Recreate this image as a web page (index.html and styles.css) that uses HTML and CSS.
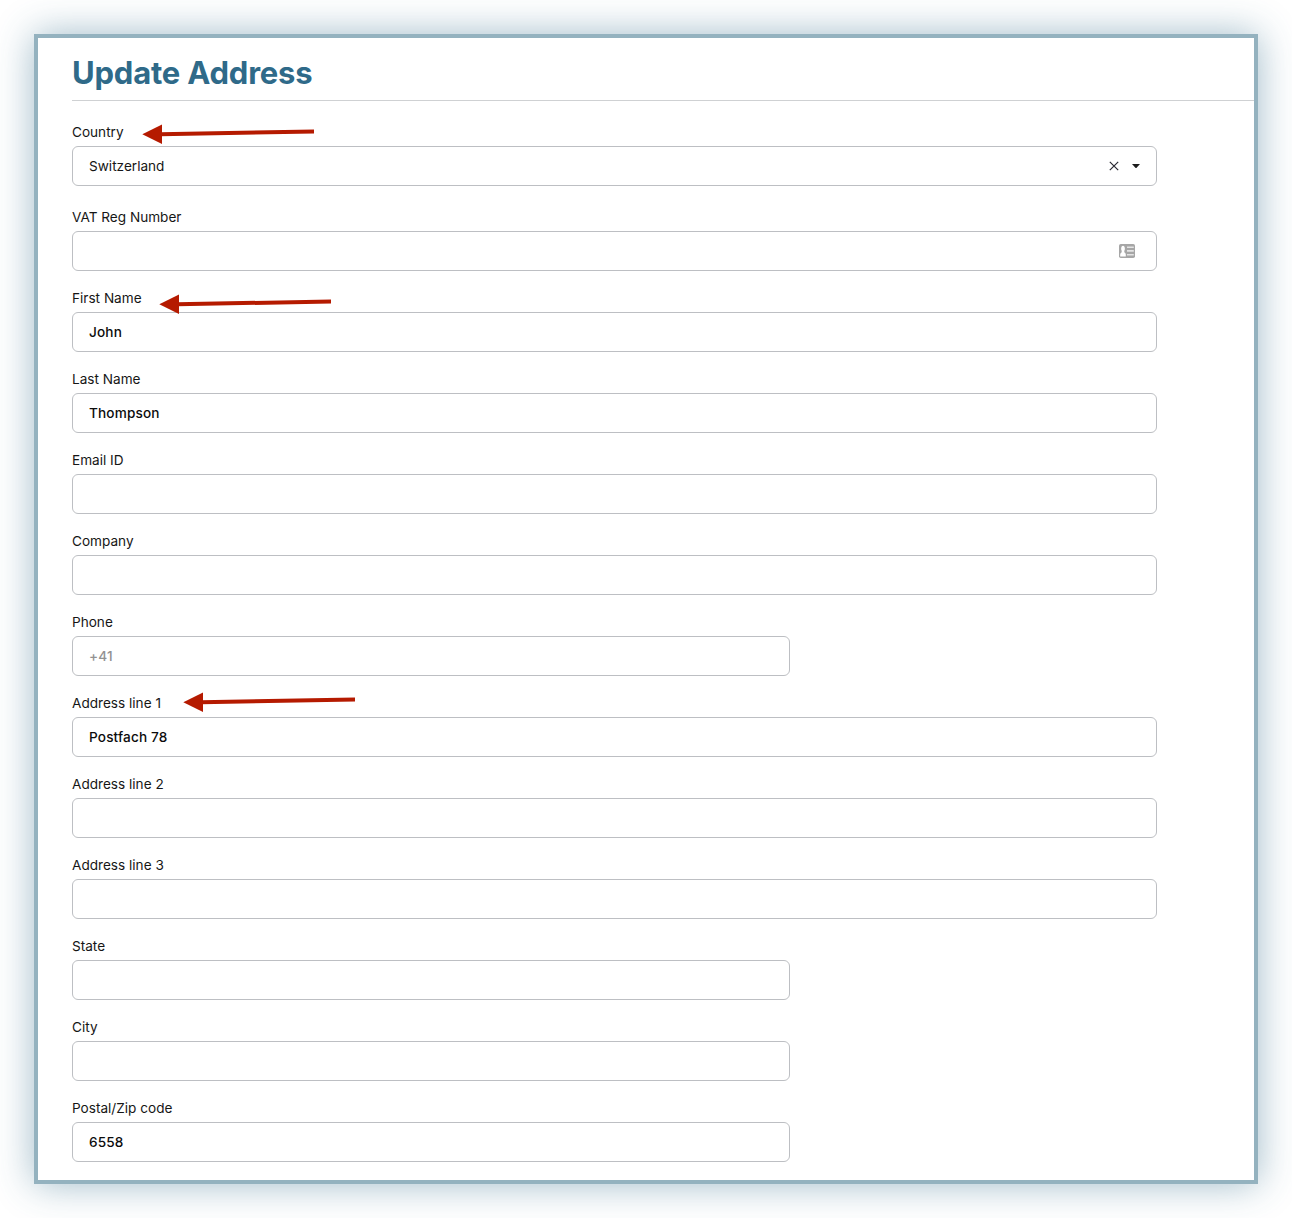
FILE: index.html
```html
<!DOCTYPE html>
<html lang="en">
<head>
<meta charset="utf-8">
<title>Update Address</title>
<link rel="stylesheet" href="styles.css">
</head>
<body>
<svg class="defs" aria-hidden="true">
  <symbol id="arrow" viewBox="0 0 173 20">
    <path class="arrow-shaft" d="M18 10.2 172 7.6"/>
    <path class="arrow-head" d="M0.3 10.3 20 0.5V20Z"/>
  </symbol>
</svg>
<main class="panel">
  <h1 class="title">Update Address</h1>
  <form class="form">
    <div class="field field-country">
      <label class="label"><span>Country</span><svg class="arrow arrow-country"><use href="#arrow"/></svg></label>
      <div class="control select">
        <span class="value">Switzerland</span>
        <svg class="clear" viewBox="0 0 10 10"><path d="M.8.8 9.2 9.2M9.2.8.8 9.2"/></svg>
        <svg class="caret" viewBox="0 0 8 4"><path d="M0 0H8L4.6 3.7Q4 4.2 3.4 3.7Z"/></svg>
      </div>
    </div>
    <div class="field">
      <label class="label">VAT Reg Number</label>
      <div class="control vat">
        <svg class="card" viewBox="0 0 16 14">
          <rect class="card-base" width="16" height="14" rx="1.8"/>
          <path class="card-light" d="M1.2 12.5V10.5Q1.2 9 2.7 8.3V6.8Q2 6 2.2 3.8 2.5 1.7 4 1.7T5.8 3.8Q6 6 5.3 6.8V8.3Q6.8 9 6.8 10.5V12.5Z"/>
          <path class="card-lines" d="M8 3.2H14.8M8 6.9H14.8M8 10.8H14.8"/>
        </svg>
      </div>
    </div>
    <div class="field">
      <label class="label"><span>First Name</span><svg class="arrow arrow-first"><use href="#arrow"/></svg></label>
      <div class="control"><span class="value">John</span></div>
    </div>
    <div class="field">
      <label class="label">Last Name</label>
      <div class="control"><span class="value">Thompson</span></div>
    </div>
    <div class="field">
      <label class="label">Email ID</label>
      <div class="control"></div>
    </div>
    <div class="field">
      <label class="label">Company</label>
      <div class="control"></div>
    </div>
    <div class="field field-short">
      <label class="label">Phone</label>
      <div class="control placeholder"><span class="value">+41</span></div>
    </div>
    <div class="field">
      <label class="label"><span>Address line 1</span><svg class="arrow arrow-address"><use href="#arrow"/></svg></label>
      <div class="control"><span class="value">Postfach 78</span></div>
    </div>
    <div class="field">
      <label class="label">Address line 2</label>
      <div class="control"></div>
    </div>
    <div class="field">
      <label class="label">Address line 3</label>
      <div class="control"></div>
    </div>
    <div class="field field-short">
      <label class="label">State</label>
      <div class="control"></div>
    </div>
    <div class="field field-short">
      <label class="label">City</label>
      <div class="control"></div>
    </div>
    <div class="field field-short">
      <label class="label">Postal/Zip code</label>
      <div class="control"><span class="value">6558</span></div>
    </div>
  </form>
</main>
</body>
</html>
```
FILE: styles.css
```css
* { box-sizing: border-box; }

body {
  margin: 0;
  padding: 34px;
  height: 1218px;
  overflow: hidden;
  background: #fff;
  color: #161616;
  font-family: Inter, "Liberation Sans", sans-serif;
  font-size: 13.6px;
}

.defs { position: absolute; width: 0; height: 0; }

.panel {
  height: 1150px;
  padding-left: 34px;
  border: 4px solid #94b2bf;
  background: #fff;
  box-shadow: 0 0 36px rgba(45, 105, 135, .46);
}

.title {
  margin: 0;
  height: 63px;
  padding-top: 14px;
  border-bottom: 1px solid #cfd1d3;
  color: #2f6a89;
  font-size: 31px;
  font-weight: 700;
  letter-spacing: -0.2px;
  line-height: 41px;
}

.form {
  display: flex;
  flex-direction: column;
  gap: 13px;
  width: 1085px;
  padding-top: 17px;
}

.field-country { margin-bottom: 4px; }
.field-short { width: 718px; }

.label {
  position: relative;
  display: block;
  height: 28px;
  line-height: 28px;
}

.control {
  display: flex;
  align-items: center;
  height: 40px;
  padding: 0 16px;
  border: 1px solid #bdbfc3;
  border-radius: 6px;
  font-weight: 500;
  letter-spacing: 0.15px;
  color: #0c0c0c;
}

.value {
  flex: 1;
  line-height: 18px;
  padding-bottom: 1px;
}

.select {
  font-weight: 400;
  letter-spacing: 0;
  color: #161616;
}

.placeholder { color: #929292; }

.clear {
  width: 10px;
  height: 10px;
  margin-right: 13px;
  fill: none;
  stroke: #292932;
  stroke-width: 1.2;
}

.caret { width: 8px; height: 4px; fill: #1c1c1c; }

.vat { justify-content: flex-end; padding-right: 21px; }
.card { width: 16px; height: 14px; }
.card-base { fill: #a6a6a6; }
.card-light { fill: #fff; }
.card-lines { stroke: #e4e4e4; stroke-width: 1.6; }

/* Callout arrows lie over the form */
.arrow { position: absolute; width: 173px; height: 20px; }
.arrow-country { left: 70px; top: 6px; }
.arrow-first { left: 87px; top: 10px; }
.arrow-address { left: 111px; top: 3px; }
.arrow-head { fill: #b51a00; }
.arrow-shaft { stroke: #b51a00; stroke-width: 4; }
```
